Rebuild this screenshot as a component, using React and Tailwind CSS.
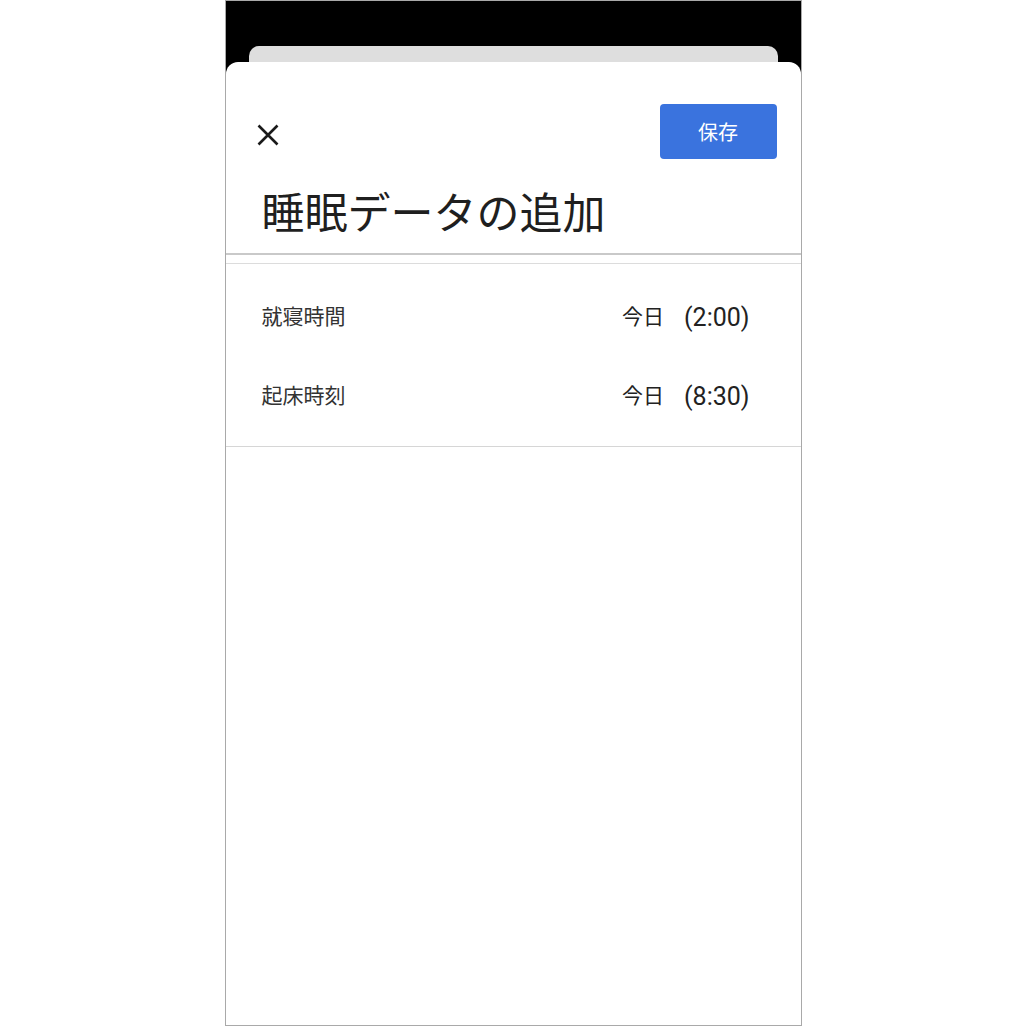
const rows = [
  { label: "就寝時間", day: "今日", time: "(2:00)" },
  { label: "起床時刻", day: "今日", time: "(8:30)" },
]

export default function App() {
  return (
    <div
      className="flex h-[1026px] w-full justify-center bg-white"
      style={{ fontFamily: '"Noto Sans CJK JP", "Noto Sans", sans-serif' }}
    >
      <div className="flex h-[1026px] w-[577px] flex-col border border-[#a9a9a9] bg-black">
        {/* backdrop behind the sheet */}
        <div className="h-[61px] px-[23px] pt-[45px]">
          <div className="h-[16px] rounded-t-[10px] bg-[#dedede]" />
        </div>

        {/* sheet */}
        <div className="flex flex-1 flex-col rounded-t-[12px] bg-white">
          <div className="flex items-center justify-between pl-[31px] pr-[24px] pt-[42px]">
            <button className="mt-[7px] flex h-[22px] w-[22px] items-center justify-center text-[#1a1a1a]">
              <svg width="22" height="22" viewBox="0 0 22 22" fill="none" stroke="currentColor" strokeWidth="2.6">
                <path d="M1.5 1.5 L20.5 20.5 M20.5 1.5 L1.5 20.5" />
              </svg>
            </button>
            <button className="flex h-[55px] w-[117px] items-center justify-center rounded-[4px] bg-[#3a73de] text-[20px] text-white">
              保存
            </button>
          </div>

          <h1 className="mb-[21px] ml-[36px] mt-[30px] text-[43px] font-normal leading-[43px] text-[#1f1f1f]">
            睡眠データの追加
          </h1>

          <div className="h-[2px] bg-[#c9c9c9]" />
          <div className="mt-[8px] border-b border-[#dcdcdc]" />

          <div className="border-b border-[#d6d6d6] py-[12px]">
            {rows.map((row) => (
              <div key={row.label} className="flex h-[79px] items-center justify-between pl-[36px] pr-[51px]">
                <span className="text-[21px] text-[#333333]">{row.label}</span>
                <span className="flex items-baseline text-[#222222]">
                  <span className="text-[21px]">{row.day}</span>
                  <span className="ml-[20px] translate-y-[2px] font-['Roboto',sans-serif] text-[25px]">{row.time}</span>
                </span>
              </div>
            ))}
          </div>
        </div>
      </div>
    </div>
  )
}
